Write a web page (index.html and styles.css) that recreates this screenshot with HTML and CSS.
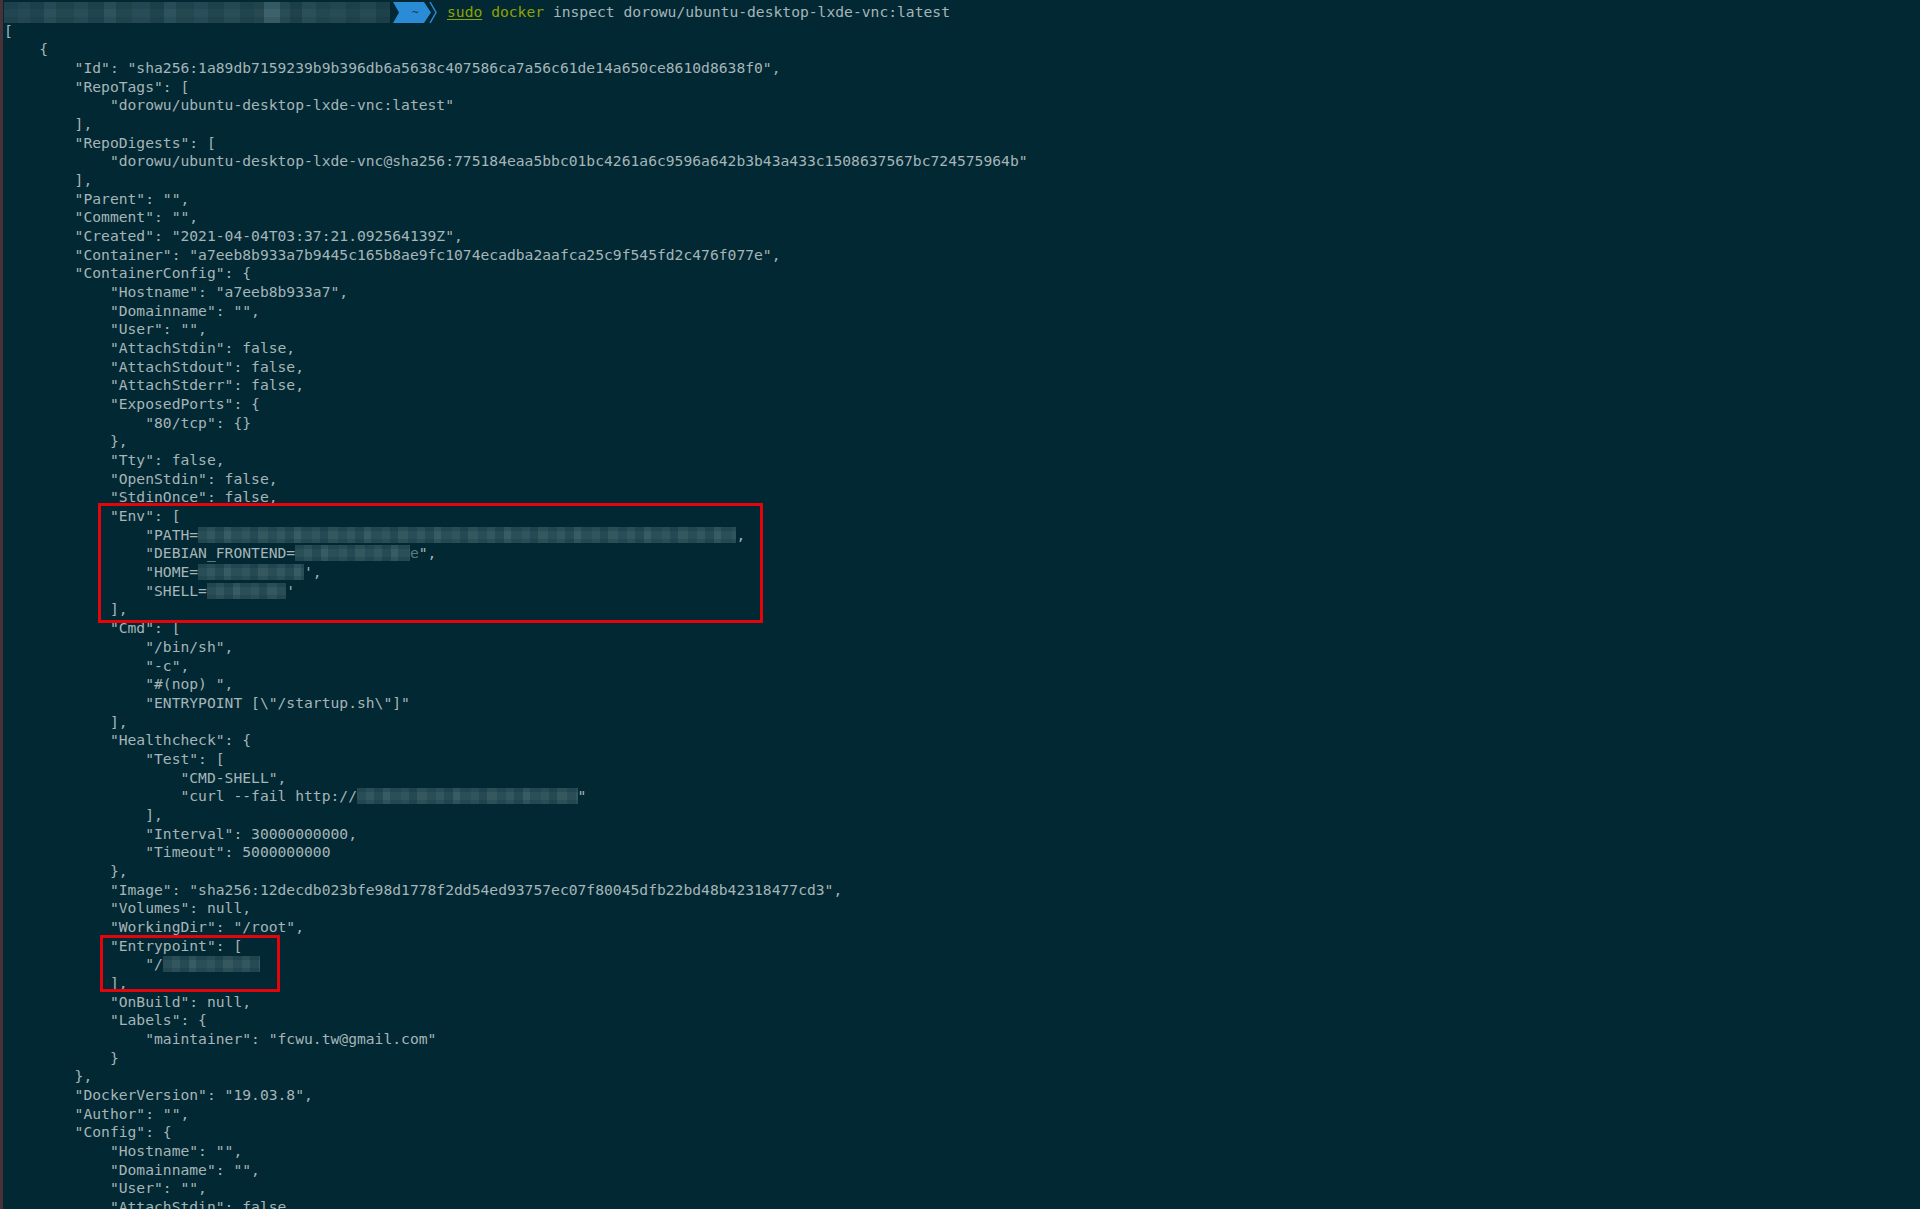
FILE: index.html
```
<!DOCTYPE html>
<html lang="en">
<head>
    <meta charset="UTF-8">
    <meta name="viewport" content="width=device-width, initial-scale=1.0">
    <title>sudo docker inspect</title>
    <link rel="stylesheet" href="styles.css">
</head>
<body>
    <div class="term">
        <div class="prompt">
            <span class="host"></span>
            <svg class="seg" width="44" height="21" viewBox="0 0 44 21">
                <polygon points="0,0 31,0 38,10.5 31,21 0,21 6,10.5" fill="#2a8bd6"/>
                <polyline points="37,0 43,10.5 37,21" fill="none" stroke="#2a8bd6" stroke-width="1.5"/>
                <text x="19" y="14" class="tilde">~</text>
            </svg>
            <span class="cmd"><span class="sudo">sudo</span> <span class="bin">docker</span> inspect dorowu/ubuntu-desktop-lxde-vnc:latest</span>
        </div>
<pre class="out">[
    {
        "Id": "sha256:1a89db7159239b9b396db6a5638c407586ca7a56c61de14a650ce8610d8638f0",
        "RepoTags": [
            "dorowu/ubuntu-desktop-lxde-vnc:latest"
        ],
        "RepoDigests": [
            "dorowu/ubuntu-desktop-lxde-vnc@sha256:775184eaa5bbc01bc4261a6c9596a642b3b43a433c1508637567bc724575964b"
        ],
        "Parent": "",
        "Comment": "",
        "Created": "2021-04-04T03:37:21.092564139Z",
        "Container": "a7eeb8b933a7b9445c165b8ae9fc1074ecadba2aafca25c9f545fd2c476f077e",
        "ContainerConfig": {
            "Hostname": "a7eeb8b933a7",
            "Domainname": "",
            "User": "",
            "AttachStdin": false,
            "AttachStdout": false,
            "AttachStderr": false,
            "ExposedPorts": {
                "80/tcp": {}
            },
            "Tty": false,
            "OpenStdin": false,
            "StdinOnce": false,
            "Env": [
                "PATH=<span class="blur w61"></span>,
                "DEBIAN_FRONTEND=<span class="blur w13"></span><span class="dim">e</span>",
                "HOME=<span class="blur w12"></span>',
                "SHELL=<span class="blur w9"></span>'
            ],
            "Cmd": [
                "/bin/sh",
                "-c",
                "#(nop) ",
                "ENTRYPOINT [\"/startup.sh\"]"
            ],
            "Healthcheck": {
                "Test": [
                    "CMD-SHELL",
                    "curl --fail http://<span class="blur w25"></span>"
                ],
                "Interval": 30000000000,
                "Timeout": 5000000000
            },
            "Image": "sha256:12decdb023bfe98d1778f2dd54ed93757ec07f80045dfb22bd48b42318477cd3",
            "Volumes": null,
            "WorkingDir": "/root",
            "Entrypoint": [
                "/<span class="blur w11"></span>
            ],
            "OnBuild": null,
            "Labels": {
                "maintainer": "fcwu.tw@gmail.com"
            }
        },
        "DockerVersion": "19.03.8",
        "Author": "",
        "Config": {
            "Hostname": "",
            "Domainname": "",
            "User": "",
            "AttachStdin": false,
            "AttachStdout": false,</pre>
        <div class="mark mark-env"></div>
        <div class="mark mark-entry"></div>
    </div>
</body>
</html>
```

FILE: styles.css
```
* {
    box-sizing: border-box;
}

html, body {
    margin: 0;
    height: 100%;
    background: #012833;
}

.term {
    position: relative;
    height: 100vh;
    overflow: hidden;
    border-left: 3px solid #4b3238;
    padding: 3px 0 0 1px;
    font-family: 'DejaVu Sans Mono', 'Liberation Mono', monospace;
    font-size: 14.67px;
    line-height: 18.67px;
    color: #a6b5b8;
}

.prompt {
    display: flex;
    align-items: center;
    height: 18.67px;
}

.host {
    width: 386px;
    height: 21px;
    flex-shrink: 0;
    background:
        linear-gradient(180deg, rgba(1, 40, 51, 0.15) 0 35%, transparent 35% 70%, rgba(1, 40, 51, 0.12) 70%),
        linear-gradient(90deg,
            #214651 0 14px, #274b56 14px 26px, #204450 26px 40px, #2b515c 40px 52px,
            #23484f 52px 70px, #294e58 70px 84px, #214550 84px 100px, #2d535d 100px 112px,
            #23474f 112px 128px, #284d58 128px 146px, #20444e 146px 160px, #2c535e 160px 172px,
            #244951 172px 190px, #2a4f5a 190px 204px, #22464f 204px 220px, #294e58 220px 236px,
            #21454e 236px 250px, #27494f 250px 260px, #3d626b 260px 276px, #284d57 276px 286px,
            #1f424c 286px 298px, #2b505a 298px 312px, #23484f 312px 326px, #284c56 326px 342px,
            #21454f 342px 356px, #274b55 356px 372px, #1e414b 372px 386px);
}

.seg {
    display: block;
    flex-shrink: 0;
    margin-left: 3px;
}

.tilde {
    font-family: 'DejaVu Sans Mono', monospace;
    font-size: 11px;
    fill: #12384a;
}

.cmd {
    margin-left: 10px;
    white-space: pre;
}

.sudo {
    color: #8fa300;
    text-decoration: underline;
    text-underline-offset: 2px;
}

.bin {
    color: #8fa300;
}

.out {
    margin: 0;
    font: inherit;
    line-height: inherit;
    color: inherit;
}

.blur {
    display: inline-block;
    vertical-align: top;
    height: 16px;
    margin-top: 1px;
    background:
        linear-gradient(180deg, rgba(1, 40, 51, 0.2) 0 25%, transparent 25% 72%, rgba(1, 40, 51, 0.18) 72%),
        repeating-linear-gradient(90deg,
            #2a4e57 0 9px, #33575f 9px 17px, #274b55 17px 26px, #385c64 26px 33px,
            #2b4f58 33px 44px, #31555d 44px 52px, #264a53 52px 60px, #35585f 60px 70px);
}

.w9 { width: 9ch; }
.w11 { width: 11ch; }
.w12 { width: 12ch; }
.w13 { width: 13ch; }
.w25 { width: 25ch; }
.w61 { width: 61ch; }

.dim {
    color: #5f7a80;
}

.mark {
    position: absolute;
    border: 3px solid #e3050b;
}

.mark-env {
    left: 95px;
    top: 503px;
    width: 665px;
    height: 120px;
}

.mark-entry {
    left: 97px;
    top: 935px;
    width: 180px;
    height: 57px;
}
```
